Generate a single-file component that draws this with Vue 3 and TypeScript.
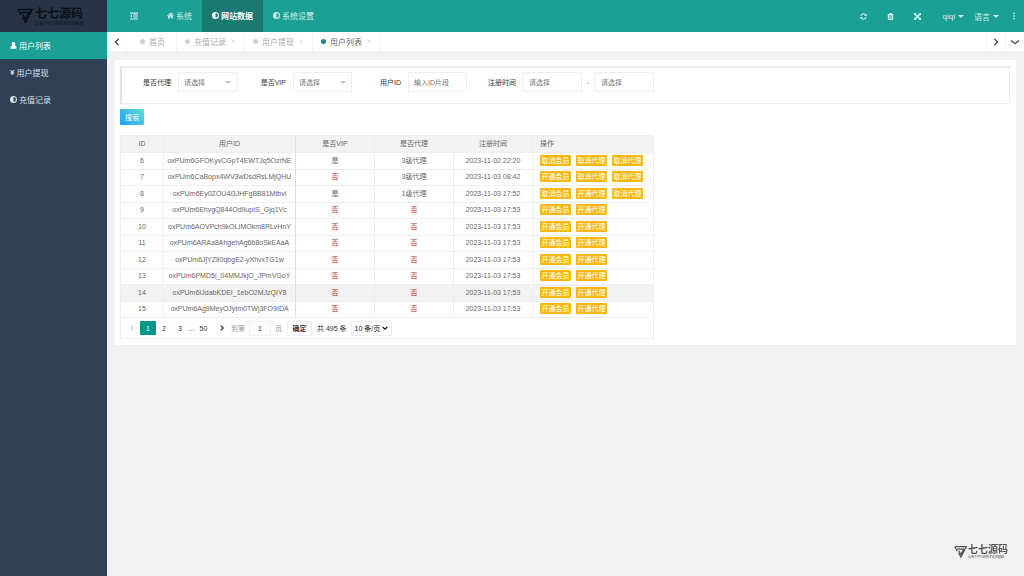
<script setup lang="ts">
import { ref } from 'vue'

interface Row {
  id: number
  uid: string
  vip: boolean
  agent: string
  time: string
  actions: string[]
}

const cancelVip = '取消会员'
const openVip = '开通会员'
const cancelAgent = '取消代理'
const openAgent = '开通代理'

const rows: Row[] = [
  { id: 6, uid: 'oxPUm6GFOKyvCGpT4EWTJq5OzrNE', vip: true, agent: '3级代理', time: '2023-11-02 22:20', actions: [cancelVip, cancelAgent, cancelAgent] },
  { id: 7, uid: 'oxPUm6CaBopx4WV3wDsdRsLMjQHU', vip: false, agent: '3级代理', time: '2023-11-03 08:42', actions: [openVip, cancelAgent, cancelAgent] },
  { id: 8, uid: 'oxPUm6Ey0ZOU4i3JHFgBB81Mtbvl', vip: true, agent: '1级代理', time: '2023-11-03 17:52', actions: [cancelVip, openAgent, cancelAgent] },
  ...[
    'oxPUm6EhvgQ844Od9uptS_Gjq1Vc',
    'oxPUm6AOVPch9kOLIMOkm8RLvHnY',
    'oxPUm6ARAa8AhgehAg6b8oSkEAaA',
    'oxPUm6JjYZlI0qbgE2-yXhvxTG1w',
    'oxPUm6PMD5i_04MMJkjO_JPmVGoY',
    'oxPUm6IJdabKDEI_1ebO2MJzQIY8',
    'oxPUm6Ag9MeyOJyIm0TWj3FO9IDA',
  ].map((uid, i) => ({ id: 9 + i, uid, vip: false, agent: '', time: '2023-11-03 17:53', actions: [openVip, openAgent] })),
]

const tabs = [
  { name: '首页', closable: false },
  { name: '充值记录', closable: true },
  { name: '用户提现', closable: true },
  { name: '用户列表', closable: true },
]
const activeTab = ref('用户列表')
const hovered = 14
</script>

<template>
  <div class="app">
    <aside class="side">
      <div class="logo">
        <svg class="mark" viewBox="0 0 32 32" aria-hidden="true">
          <path d="M2 3H30L17 29L11 18M2 3L8 14M8 9H24L17 22L12 13" />
        </svg>
        <div class="words">
          <strong>七七源码</strong>
          <small>让每个平凡的技术走向巅峰</small>
        </div>
      </div>
      <nav class="menu">
        <a href="#" class="on">
          <svg viewBox="0 0 14 14" aria-hidden="true"><path d="M7 0a3.500 3.800 0 0 1 2.400 6.700L13 10v3.500H1V10l3.600-3.300A3.500 3.800 0 0 1 7 0z" /></svg>
          <span>用户列表</span>
        </a>
        <a href="#"><i>¥</i><span>用户提现</span></a>
        <a href="#">
          <svg viewBox="0 0 14 14" aria-hidden="true"><path fill-rule="evenodd" d="M7 0a7 7 0 1 1 0 14A7 7 0 0 1 7 0zm0 2.200v9.600a4.800 4.800 0 0 0 0-9.600z" /></svg>
          <span>充值记录</span>
        </a>
      </nav>
    </aside>

    <div class="main">
      <header class="top">
        <button class="fold" aria-label="折叠菜单">
          <svg viewBox="0 0 16 16" aria-hidden="true"><path d="M0 1h16v2.500H0zM6 5h10v2.200H6zM6 9h10v2.200H6zM0 12.800h16V15H0zM0 8l4-3.200v6.400z" /></svg>
        </button>
        <nav class="modules">
          <a href="#">
            <svg viewBox="0 0 16 14" aria-hidden="true"><path d="M8 0l3 2.700V1h2v3.500L16 7.200l-1 1L8 2.200l-7 6-1-1zM8 3.700l5.500 4.700V14H9.600v-4H6.400v4H2.500V8.400z" /></svg>
            <span>系统</span>
          </a>
          <a href="#" class="on">
            <svg viewBox="0 0 14 14" aria-hidden="true"><path fill-rule="evenodd" d="M7 0a7 7 0 1 1 0 14A7 7 0 0 1 7 0zm0 2.200v9.600a4.800 4.800 0 0 0 0-9.600z" /></svg>
            <span>网站数据</span>
          </a>
          <a href="#">
            <svg viewBox="0 0 14 14" aria-hidden="true"><path fill-rule="evenodd" d="M7 0a7 7 0 1 1 0 14A7 7 0 0 1 7 0zm0 2.200v9.600a4.800 4.800 0 0 0 0-9.600z" /></svg>
            <span>系统设置</span>
          </a>
        </nav>
        <div class="tools">
          <button class="tool" aria-label="刷新">
            <svg viewBox="0 0 16 16" aria-hidden="true"><path class="line" d="M2 7a6 6 0 0 1 10.500-3M14 9a6 6 0 0 1-10.500 3" /><path d="M15 1v6H9zM1 15V9h6z" /></svg>
          </button>
          <button class="tool" aria-label="清理">
            <svg viewBox="0 0 16 16" aria-hidden="true"><path fill-rule="evenodd" d="M5.500 0h5l1 2H15v2.200h-1V16H2V4.200H1V2h3.500zM4.500 5v8.500h1.200V5zm2.900 0v8.500h1.200V5zm2.900 0v8.500h1.200V5z" /></svg>
          </button>
          <button class="tool" aria-label="全屏">
            <svg viewBox="0 0 16 16" aria-hidden="true"><path d="M0 0h6L4.300 1.700 8 5.500l3.700-3.800L10 0h6v6l-1.700-1.700L10.500 8l3.800 3.700L16 10v6h-6l1.700-1.700L8 10.500l-3.700 3.800L6 16H0v-6l1.700 1.700L5.500 8 1.700 4.300 0 6z" /></svg>
          </button>
          <button class="drop user">qiqi<b class="caret"></b></button>
          <button class="drop">语言<b class="caret"></b></button>
          <button class="more" aria-label="更多">
            <svg viewBox="0 0 4 16" aria-hidden="true"><path d="M.5 1h3v3h-3zM.5 6.500h3v3h-3zM.5 12h3v3h-3z" /></svg>
          </button>
        </div>
      </header>

      <div class="tabs">
        <button class="arrow" aria-label="向左"><svg viewBox="0 0 10 10" aria-hidden="true"><path d="M7 1L3 5l4 4" /></svg></button>
        <div class="list">
          <div v-for="t in tabs" :key="t.name" class="tab" :class="{ on: t.name === activeTab, home: !t.closable }">
            <button class="name" @click="activeTab = t.name"><b class="dot"></b>{{ t.name }}</button>
            <button v-if="t.closable" class="close" aria-label="关闭">
              <svg viewBox="0 0 10 10" aria-hidden="true"><path d="M1 1l8 8M9 1L1 9" /></svg>
            </button>
          </div>
        </div>
        <button class="arrow right" aria-label="向右"><svg viewBox="0 0 10 10" aria-hidden="true"><path d="M3 1l4 4-4 4" /></svg></button>
        <button class="arrow right" aria-label="标签操作"><svg viewBox="0 0 10 10" aria-hidden="true"><path d="M0 3l5 4 5-4" /></svg></button>
      </div>

      <main class="card">
        <form @submit.prevent>
          <div class="filters">
            <div class="field">
              <label for="agent">是否代理</label>
              <span class="pick"><select id="agent"><option>请选择</option></select></span>
            </div>
            <div class="field">
              <label for="vip">是否VIP</label>
              <span class="pick"><select id="vip"><option>请选择</option></select></span>
            </div>
            <div class="field">
              <label for="uid">用户ID</label>
              <input id="uid" type="text" placeholder="输入ID片段" />
            </div>
            <div class="field">
              <label for="from">注册时间</label>
              <input id="from" type="text" placeholder="请选择" />
              <span class="dash">-</span>
              <input type="text" placeholder="请选择" aria-label="注册时间止" />
            </div>
          </div>
          <button class="search">搜索</button>
        </form>

        <section class="grid">
          <table>
            <colgroup><col class="c1" /><col class="c2" /><col class="c3" /><col class="c3" /><col class="c3" /><col /></colgroup>
            <thead>
              <tr><th>ID</th><th class="fixed">用户ID</th><th>是否VIP</th><th>是否代理</th><th>注册时间</th><th class="ops">操作</th></tr>
            </thead>
            <tbody>
              <tr v-for="r in rows" :key="r.id" :class="{ hover: r.id === hovered }">
                <td>{{ r.id }}</td>
                <td class="fixed">{{ r.uid }}</td>
                <td :class="{ no: !r.vip }">{{ r.vip ? '是' : '否' }}</td>
                <td :class="{ no: !r.agent }">{{ r.agent || '否' }}</td>
                <td>{{ r.time }}</td>
                <td class="ops">
                  <div><button v-for="(a, i) in r.actions" :key="i">{{ a }}</button></div>
                </td>
              </tr>
            </tbody>
          </table>
          <div class="pager">
            <button class="pg off" aria-label="上一页"><svg viewBox="0 0 10 10" aria-hidden="true"><path d="M7 1L3 5l4 4" /></svg></button>
            <button class="pg on">1</button>
            <button class="pg">2</button>
            <button class="pg">3</button>
            <span class="gap">…</span>
            <button class="pg last">50</button>
            <button class="pg next" aria-label="下一页"><svg viewBox="0 0 10 10" aria-hidden="true"><path d="M3 1l4 4-4 4" /></svg></button>
            <label for="goto">到第</label>
            <input id="goto" type="text" value="1" />
            <label for="goto">页</label>
            <button class="ok">确定</button>
            <span class="total">共 495 条</span>
            <span class="size"><select aria-label="每页条数"><option>10 条/页</option></select><svg viewBox="0 0 10 10" aria-hidden="true"><path d="M1 3l4 4 4-4" /></svg></span>
          </div>
        </section>
      </main>
    </div>

    <div class="stamp">
      <svg class="mark" viewBox="0 0 32 32" aria-hidden="true">
        <path d="M2 3H30L17 29L11 18M2 3L8 14M8 9H24L17 22L12 13" />
      </svg>
      <div class="words">
        <strong>七七源码</strong>
        <small>让每个平凡的技术走向巅峰</small>
      </div>
    </div>
  </div>
</template>

<style>
body {
  background: #f1f1f1;
}
</style>

<style scoped>
.app,
.app * {
  box-sizing: border-box;
}
.app {
  display: grid;
  grid-template-columns: 107px 1fr;
  min-height: 100vh;
  font-family: "Liberation Sans", "Noto Sans CJK SC", sans-serif;
  font-size: 8px;
  color: #666;
}
button,
input,
select {
  margin: 0;
  padding: 0;
  border: 0;
  background: none;
  color: inherit;
  font: inherit;
  min-width: 0;
}
button {
  display: flex;
  align-items: center;
  justify-content: center;
  white-space: nowrap;
}
a {
  color: inherit;
  text-decoration: none;
}
svg {
  display: block;
  fill: currentColor;
}

/* sidebar */
.side {
  background: #2f4056;
  color: #dde1e5;
}
.logo {
  display: flex;
  align-items: center;
  gap: 2px;
  height: 32px;
  padding-left: 17px;
  background: #263445;
  color: #0b1017;
}
.mark {
  fill: none;
  stroke: currentColor;
  stroke-width: 3;
}
.logo .mark {
  width: 16px;
  height: 18px;
}
.words {
  display: flex;
  flex-direction: column;
  white-space: nowrap;
}
.words strong {
  font-size: 12px;
  line-height: 14px;
  font-weight: bold;
}
.words small {
  font-size: 4px;
  line-height: 5px;
}
.menu a {
  display: flex;
  align-items: center;
  gap: 2px;
  height: 27px;
  padding: 0 0 1px 10px;
}
.menu a.on {
  background: #1aa094;
  color: #fff;
}
.menu svg {
  width: 7px;
  height: 7px;
}
.menu i {
  font-style: normal;
  font-weight: bold;
}

/* header */
.main {
  min-width: 0;
}
.top {
  display: flex;
  height: 32px;
  background: #1aa094;
  color: #d3eeeb;
}
.fold {
  width: 54px;
}
.fold svg {
  width: 8px;
  height: 8px;
}
.modules {
  display: flex;
}
.modules a {
  display: flex;
  align-items: center;
  gap: 2px;
  padding: 0 10px 1px;
}
.modules a:first-child {
  padding-left: 6px;
}
.modules a.on {
  background: #1a7a70;
  color: #fff;
  font-weight: bold;
}
.modules svg {
  width: 7px;
  height: 7px;
}
.tools {
  display: flex;
  margin-left: auto;
}
.tool {
  width: 27px;
}
.tool svg {
  width: 7px;
  height: 7px;
}
.tool .line {
  fill: none;
  stroke: currentColor;
  stroke-width: 2.400;
}
.drop {
  gap: 3px;
  padding: 0 4px 0 6px;
}
.drop.user {
  padding-left: 12px;
}
.caret {
  border: 3px solid transparent;
  border-top-color: currentColor;
  border-bottom: 0;
}
.more {
  width: 21px;
}
.more svg {
  width: 2px;
  height: 8px;
}

/* tabs */
.tabs {
  display: flex;
  height: 19px;
  background: #fff;
}
.arrow {
  width: 19px;
  color: #333;
}
.arrow svg,
.close svg,
.pg svg,
.size svg {
  fill: none;
  stroke: currentColor;
  stroke-width: 2;
}
.arrow svg {
  width: 8px;
  height: 8px;
  stroke-width: 1.500;
}
.arrow.right {
  border-left: 1px solid #f4f4f4;
}
.list {
  display: flex;
  flex: 1;
}
.tab {
  display: flex;
  align-items: center;
  padding: 0 8px;
  border-right: 1px solid #f4f4f4;
  color: #aaa;
}
.tab.home {
  padding: 0 11px 0 13px;
  border-left: 1px solid #f4f4f4;
}
.tab.on {
  color: #666;
}
.name {
  gap: 4px;
}
.dot {
  width: 5px;
  height: 5px;
  border-radius: 50%;
  background: #d0d0d0;
}
.on .dot {
  background: #1b8378;
}
.close {
  margin-left: 5px;
  color: #c2c2c2;
}
.close svg {
  width: 5px;
  height: 5px;
  stroke-width: 1;
}

/* filter form */
.card {
  margin: 9px 8px;
  padding: 6px 6px 6px 5px;
  background: #fff;
  font-size: 7px;
}
.filters {
  display: flex;
  height: 38px;
  padding: 4px 0;
  border: 1px solid #eee;
  border-left: 2px solid #e2e2e2;
  border-top: 2px solid #eee;
}
.field {
  display: flex;
  align-items: center;
  height: 20px;
}
.field label {
  width: 56px;
  padding-right: 7px;
  text-align: right;
  color: #333;
  white-space: nowrap;
}
.field input,
.pick {
  width: 59px;
  height: 20px;
  border: 1px solid #eee;
  color: #757575;
}
.field input {
  padding: 0 5px;
}
.field input::placeholder {
  color: #757575;
  opacity: 1;
}
.pick {
  display: flex;
  align-items: center;
  padding-right: 5px;
}
.pick select {
  flex: 1;
  height: 18px;
  padding-left: 5px;
  appearance: none;
}
.pick::after {
  content: "";
  border: 3px solid transparent;
  border-top-color: #c2c2c2;
  border-bottom: 0;
}
.dash {
  width: 13px;
  text-align: center;
}
.search {
  width: 24px;
  height: 16px;
  margin: 5px 0 10px;
  border-radius: 1px;
  background: linear-gradient(45deg, #1e9fff, #5fe0c8);
  color: #fff;
}

/* table */
.grid {
  width: 534px;
  max-width: 100%;
  border: 1px solid #eee;
}
table {
  width: 100%;
  table-layout: fixed;
  border-collapse: separate;
  border-spacing: 0;
  line-height: 9px;
}
.c1 { width: 43px; }
.c2 { width: 132px; }
.c3 { width: 79px; }
th,
td {
  height: 17px;
  padding: 0 0 2px;
  border-right: 1px solid #eee;
  border-bottom: 1px solid #eee;
  font-weight: normal;
  text-align: center;
  white-space: nowrap;
}
th {
  background: #f2f2f2;
}
tbody tr:nth-child(even) td {
  height: 16px;
}
.hover td {
  background: #f2f2f2;
}
.fixed {
  border-right-color: #ddd;
}
.no {
  color: #b22222;
}
th:last-child,
td:last-child {
  border-right: 0;
}
.ops {
  padding-left: 7px;
  text-align: left;
}
.ops div {
  display: flex;
  gap: 5px;
}
.ops button {
  width: 31px;
  height: 11px;
  border-radius: 1px;
  background: #f7b813;
  color: #fff;
}

/* pagination */
.pager {
  display: flex;
  align-items: center;
  height: 20px;
  padding-left: 3px;
  color: #333;
}
.pg {
  width: 16px;
  height: 14px;
}
.pg.on {
  border-radius: 1px;
  background: #009688;
  color: #fff;
}
.pg.off {
  color: #d2d2d2;
}
.pg svg {
  width: 6px;
  height: 6px;
}
.gap {
  width: 6px;
  text-align: center;
}
.pg.last {
  width: 19px;
}
.pg.next {
  width: 18px;
}
.pager label {
  color: #999;
}
.pager input {
  width: 22px;
  height: 15px;
  margin: 0 4px;
  border: 1px solid #eee;
  text-align: center;
}
.ok {
  width: 25px;
  height: 15px;
  margin: 0 5px;
  border: 1px solid #eee;
  font-weight: bold;
}
.size {
  display: flex;
  align-items: center;
  gap: 1px;
  height: 15px;
  margin-left: 4px;
  padding: 0 3px;
  border: 1px solid #eee;
  color: #111;
}
.size select {
  appearance: none;
}
.size svg {
  width: 6px;
  height: 6px;
}

/* floating brand */
.stamp {
  position: fixed;
  right: 16px;
  bottom: 17px;
  display: flex;
  align-items: center;
  gap: 1px;
  color: #555;
}
.stamp .mark {
  width: 13px;
  height: 14px;
}
.stamp strong {
  font-size: 10px;
  line-height: 11px;
}
.stamp small {
  font-size: 3px;
  line-height: 4px;
}
</style>
